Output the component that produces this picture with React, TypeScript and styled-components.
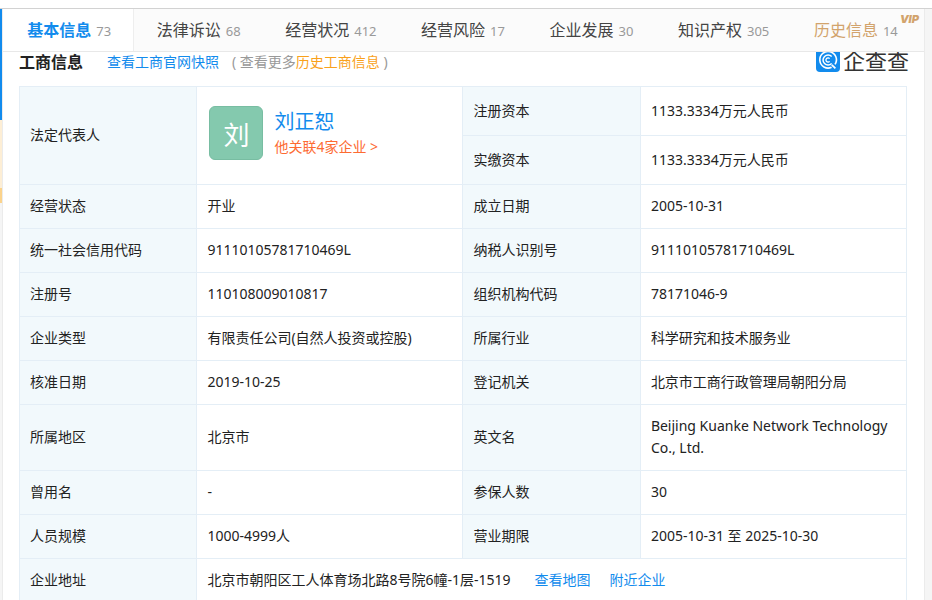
import React from "react";
import styled, { createGlobalStyle } from "styled-components";

const GlobalStyle = createGlobalStyle`
  * { box-sizing: border-box; }
  body {
    margin: 0;
    background: #f5f5f5;
    color: #222;
    font: 14px/22px "Noto Sans", "Noto Sans CJK SC", sans-serif;
  }
`;

const Screen = styled.div`
  display: flex;
  flex-direction: column;
  height: 100vh;
  overflow: hidden;
`;

const TopBar = styled.header`
  flex: none;
  height: 9px;
  background: #fff;
  border-bottom: 1px solid #d2d2d2;
`;

const Body = styled.div`
  display: flex;
  flex: 1;
  min-height: 0;
`;

const Rail = styled.aside`
  flex: none;
  width: 2px;
`;

const RailBlock = styled.div<{ $size: number; $color: string }>`
  height: ${(p) => p.$size}px;
  background: ${(p) => p.$color};
`;

const Card = styled.main`
  flex: 1;
  min-width: 0;
  margin-right: 7px;
  background: #fff;
  border: solid #ebebeb;
  border-width: 0 1px;
`;

const Tabs = styled.nav`
  position: relative;
  z-index: 1;
  display: flex;
  height: 43px;
  background: #fbfbfb;
  border-bottom: 1px solid #e8e8e8;
`;

const Tab = styled.a<{ $active?: boolean; $vip?: boolean }>`
  position: relative;
  flex: 1 1 auto;
  display: flex;
  align-items: center;
  justify-content: center;
  gap: 5px;
  padding: ${(p) => (p.$vip ? "0 4px 0 0" : p.$active ? "0 0 0 2px" : "0")};
  white-space: nowrap;
  text-decoration: none;
  font-size: 16px;
  color: ${(p) => (p.$active ? "#128bed" : p.$vip ? "#d2a36c" : "#444")};
  font-weight: ${(p) => (p.$active ? 700 : 400)};
  background: ${(p) => (p.$active ? "#fff" : "transparent")};
  border-right: ${(p) => (p.$active ? "1px solid #eee" : "0")};
`;

const Count = styled.span`
  padding-top: 2px;
  font-size: 13px;
  font-weight: 400;
  color: #999;
`;

const VipBadge = styled.span`
  position: absolute;
  top: 4px;
  right: 5px;
  font: italic 900 11px/12px Inter, sans-serif;
  color: #d2a36c;
`;

const Section = styled.section`
  padding: 0 17px 0 16px;
`;

const SectionHead = styled.div`
  display: flex;
  align-items: center;
  height: 34px;
  margin-right: -2px;
  padding-bottom: 14px;
`;

const Title = styled.h2`
  margin: 0 24px 0 0;
  font-size: 16px;
  font-weight: 700;
`;

const Link = styled.a<{ $color?: string }>`
  color: ${(p) => p.$color || "#128bed"};
  text-decoration: none;
`;

const History = styled.span`
  margin-left: 13px;
  color: #999;
`;

const Brand = styled.div`
  display: flex;
  align-items: center;
  gap: 3px;
  margin: 0 0 4px auto;
  font-size: 22px;
  line-height: 24px;
  color: #333;
`;

const Table = styled.table`
  width: 100%;
  table-layout: fixed;
  border: solid #e4eef6;
  border-width: 1px 0 0 1px;
  border-collapse: separate;
  border-spacing: 0;
`;

const Label = styled.th`
  width: 20%;
  padding: 10px 10px 11px;
  text-align: left;
  font-weight: 400;
  background: #f2f9fc;
  border: solid #e4eef6;
  border-width: 0 1px 1px 0;
`;

const Value = styled.td`
  width: 30%;
  padding: 10px 10px 11px;
  border: solid #e4eef6;
  border-width: 0 1px 1px 0;
`;

const CapitalRow = styled.tr`
  height: 49px;
`;

const Person = styled.div`
  display: flex;
  align-items: center;
  gap: 11px;
  padding: 0 2px 5px;
`;

const Avatar = styled.span`
  display: flex;
  align-items: center;
  justify-content: center;
  width: 54px;
  height: 54px;
  padding-top: 4px;
  border: 1px solid #78bda2;
  border-radius: 6px;
  background: #84c9ae;
  color: #fff;
  font-size: 26px;
`;

const PersonText = styled.div`
  display: flex;
  flex-direction: column;
`;

const PersonName = styled(Link)`
  font-size: 20px;
  line-height: 28px;
`;

const Places = styled.span`
  display: inline-flex;
  gap: 19px;
  margin-left: 24px;
`;

const tabs = [
  { name: "基本信息", count: 73, active: true },
  { name: "法律诉讼", count: 68 },
  { name: "经营状况", count: 412 },
  { name: "经营风险", count: 17 },
  { name: "企业发展", count: 30 },
  { name: "知识产权", count: 305 },
  { name: "历史信息", count: 14, vip: true },
];

const rows = [
  ["经营状态", "开业", "成立日期", "2005-10-31"],
  ["统一社会信用代码", "91110105781710469L", "纳税人识别号", "91110105781710469L"],
  ["注册号", "110108009010817", "组织机构代码", "78171046-9"],
  ["企业类型", "有限责任公司(自然人投资或控股)", "所属行业", "科学研究和技术服务业"],
  ["核准日期", "2019-10-25", "登记机关", "北京市工商行政管理局朝阳分局"],
  ["所属地区", "北京市", "英文名", "Beijing Kuanke Network Technology Co., Ltd."],
  ["曾用名", "-", "参保人数", "30"],
  ["人员规模", "1000-4999人", "营业期限", "2005-10-31 至 2025-10-30"],
];

const BrandMark = () => (
  <svg width="24" height="24" viewBox="0 0 24 24" fill="none" stroke="#fff" aria-hidden="true">
    <rect width="24" height="24" rx="4" fill="#128bed" stroke="none" />
    <path d="M15.6 19.3A8.3 8.3 0 1 1 19 16.4" strokeWidth="1.6" />
    <path d="M15.7 15.4A5 5 0 1 1 15.7 8.6" strokeWidth="1.5" />
    <path d="M13.6 13.4A2.1 2.1 0 1 1 13.6 10.6" strokeWidth="1.3" />
    <path d="M15.8 16.8L19.4 20.4" strokeWidth="1.8" />
  </svg>
);

export default function App() {
  return (
    <Screen>
      <GlobalStyle />
      <TopBar />
      <Body>
        <Rail>
          <RailBlock $size={111} $color="#128bed" />
          <RailBlock $size={68} $color="#fdeed5" />
          <RailBlock $size={15} $color="#fbd38c" />
        </Rail>
        <Card>
          <Tabs>
            {tabs.map((t) => (
              <Tab key={t.name} href="#" $active={t.active} $vip={t.vip}>
                {t.name}
                <Count>{t.count}</Count>
                {t.vip && <VipBadge>VIP</VipBadge>}
              </Tab>
            ))}
          </Tabs>
          <Section>
            <SectionHead>
              <Title>工商信息</Title>
              <Link href="#">查看工商官网快照</Link>
              <History>
                ( <Link href="#" $color="#999">查看更多</Link>
                <Link href="#" $color="#f9a11b">历史工商信息</Link> )
              </History>
              <Brand>
                <BrandMark />
                企查查
              </Brand>
            </SectionHead>
            <Table>
              <tbody>
                <CapitalRow>
                  <Label scope="row" rowSpan={2}>法定代表人</Label>
                  <Value rowSpan={2}>
                    <Person>
                      <Avatar>刘</Avatar>
                      <PersonText>
                        <PersonName href="#">刘正恕</PersonName>
                        <Link href="#" $color="#fd6b32">他关联4家企业 &gt;</Link>
                      </PersonText>
                    </Person>
                  </Value>
                  <Label scope="row">注册资本</Label>
                  <Value>1133.3334万元人民币</Value>
                </CapitalRow>
                <CapitalRow>
                  <Label scope="row">实缴资本</Label>
                  <Value>1133.3334万元人民币</Value>
                </CapitalRow>
                {rows.map(([a, b, c, d]) => (
                  <tr key={a}>
                    <Label scope="row">{a}</Label>
                    <Value>{b}</Value>
                    <Label scope="row">{c}</Label>
                    <Value>{d}</Value>
                  </tr>
                ))}
                <tr>
                  <Label scope="row">企业地址</Label>
                  <Value colSpan={3}>
                    北京市朝阳区工人体育场北路8号院6幢-1层-1519
                    <Places>
                      <Link href="#">查看地图</Link>
                      <Link href="#">附近企业</Link>
                    </Places>
                  </Value>
                </tr>
              </tbody>
            </Table>
          </Section>
        </Card>
      </Body>
    </Screen>
  );
}
